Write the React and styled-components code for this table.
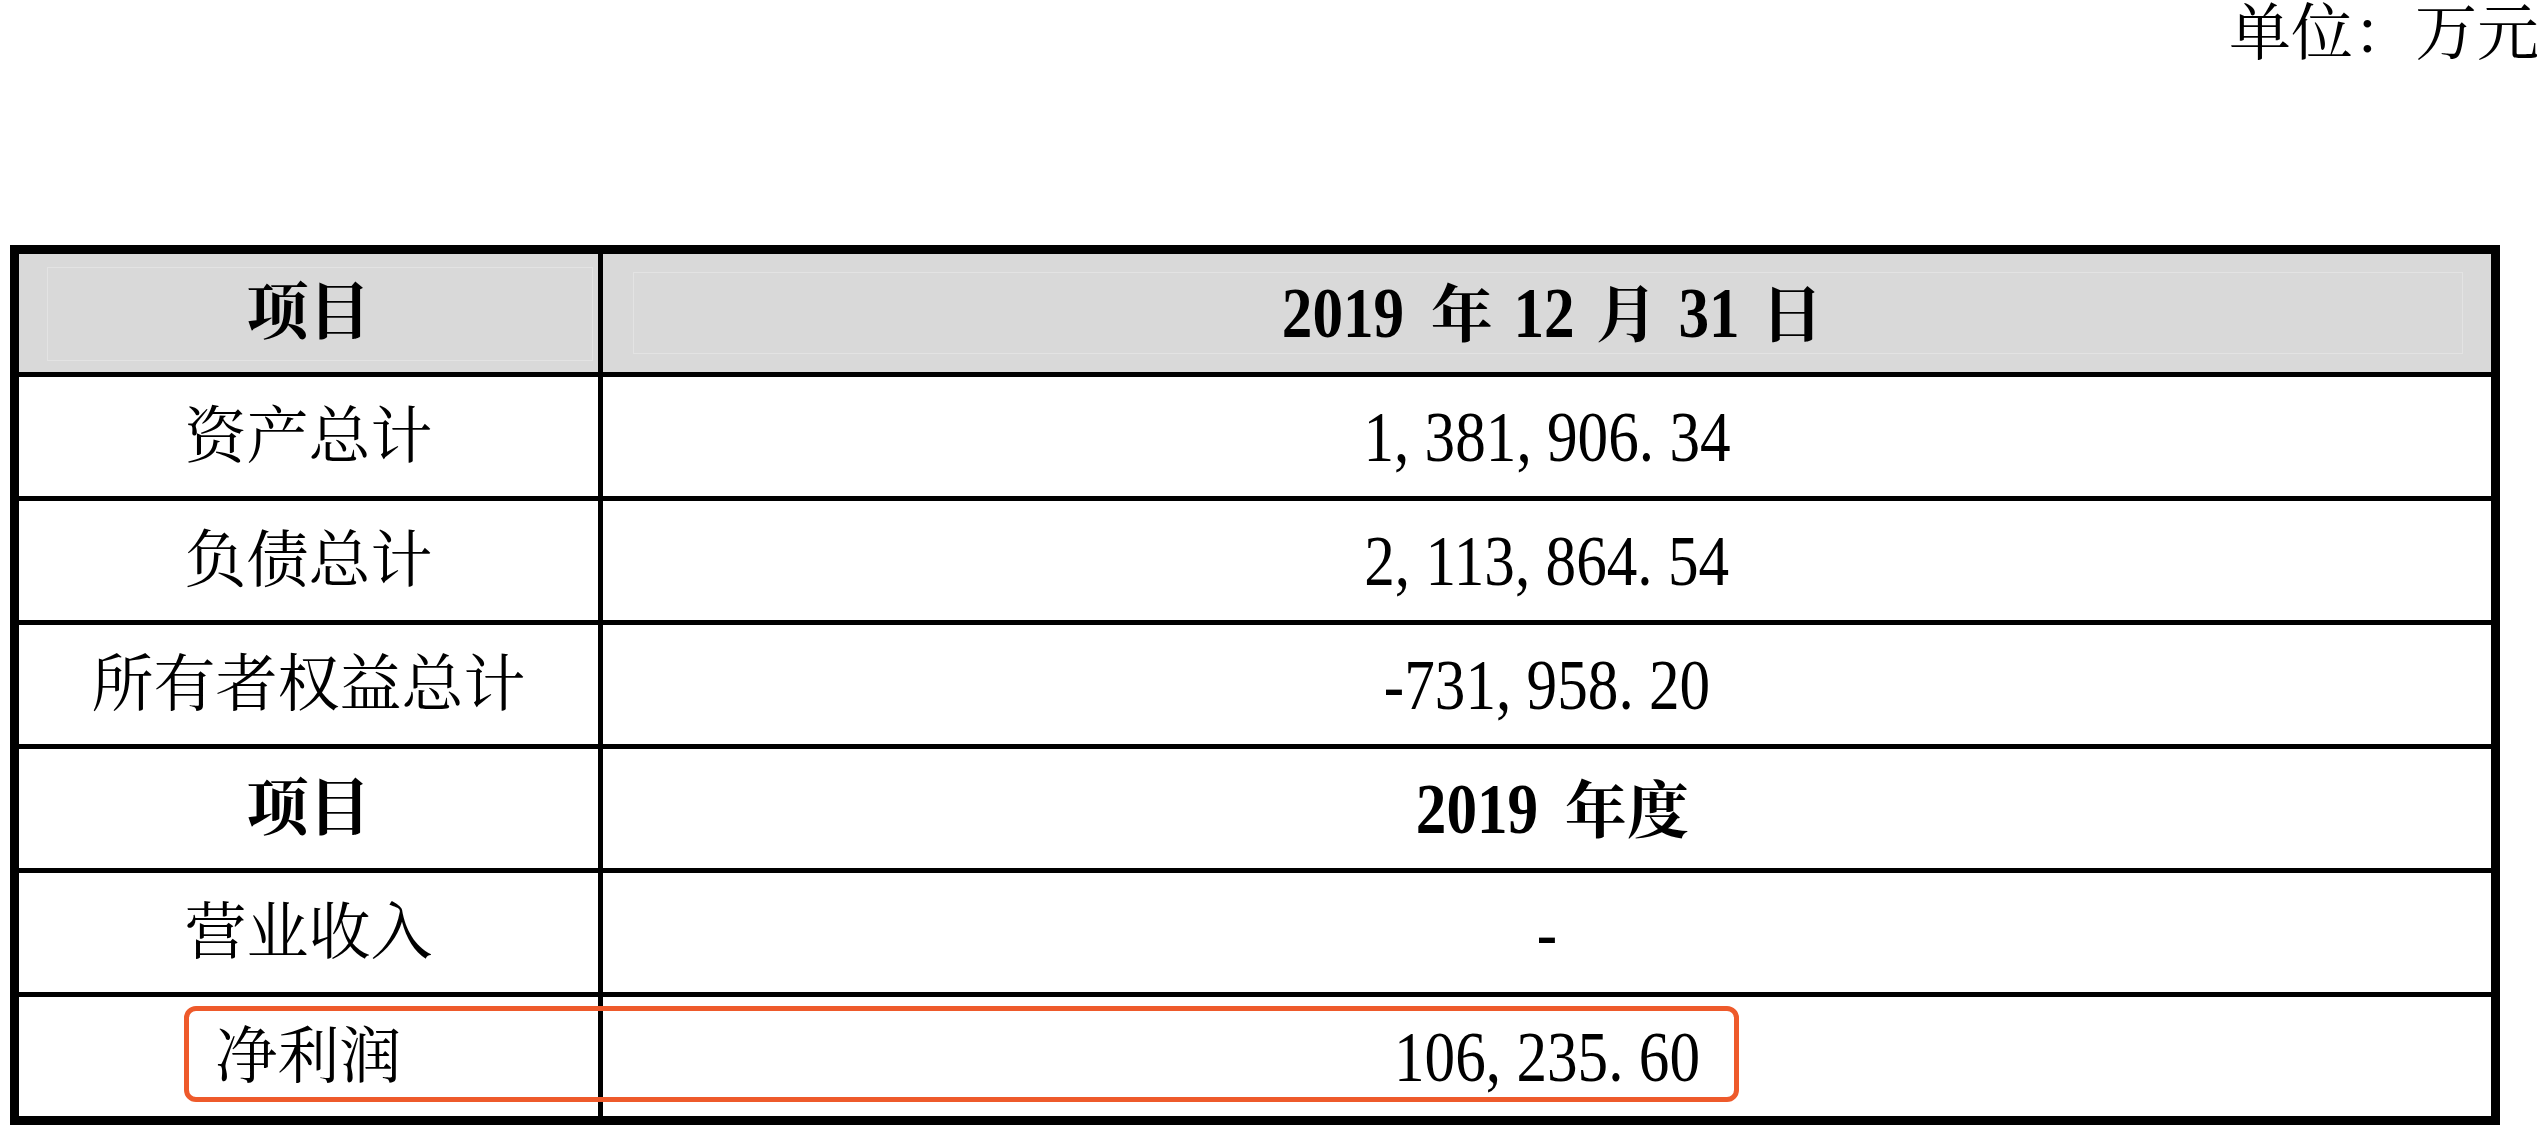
import React from 'react';
import styled, { createGlobalStyle } from 'styled-components';

const GlobalStyle = createGlobalStyle`
  html, body {
    margin: 0;
    padding: 0;
    background: #fff;
  }
  body {
    font-family: "Liberation Serif", "Noto Serif CJK SC", "Noto Sans CJK SC", serif;
    color: #000;
  }
`;

const Page = styled.div`
  width: 2548px;
  height: 1128px;
  overflow: hidden;
  background: #fff;
`;

const Unit = styled.div`
  height: 68px;
  line-height: 68px;
  font-size: 62px;
  text-align: right;
  padding-right: 9px;
`;

const Table = styled.div`
  margin: 177px 0 0 10px;
  width: 2490px;
  box-sizing: border-box;
  border: 9px solid #000;
  display: flex;
  flex-direction: column;
`;

const Row = styled.div`
  position: relative;
  display: grid;
  grid-template-columns: 579px 1fr;
  height: ${p => p.$h}px;
  border-top: ${p => (p.$first ? 0 : 5)}px solid #000;
  background: ${p => (p.$shaded ? '#d9d9d9' : '#fff')};
`;

const Cell = styled.div`
  position: relative;
  display: flex;
  align-items: center;
  justify-content: center;
  font-size: 62px;
  line-height: 1;
  font-weight: ${p => (p.$bold ? 700 : 400)};
  white-space: nowrap;

  & + & {
    border-left: 5px solid #000;
  }

  ${p =>
    p.$frame &&
    `
    &::before {
      content: "";
      position: absolute;
      top: ${p.$frame[0]}px;
      right: ${p.$frame[1]}px;
      bottom: ${p.$frame[2]}px;
      left: ${p.$frame[3]}px;
      border: 1px solid #e3e3e3;
    }
  `}
`;

const Label = styled.span`
  position: relative;
`;

const Digits = styled.span`
  display: inline-block;
  font-family: "Liberation Serif", serif;
  font-size: 72px;
  transform: scaleX(0.85);
`;

const Punct = styled.span`
  margin-right: 0.25em;
`;

const Highlight = styled.div`
  position: absolute;
  left: 165px;
  top: 9px;
  width: 1555px;
  height: 96px;
  box-sizing: border-box;
  border: 5px solid #ee5a2b;
  border-radius: 12px;
  pointer-events: none;
`;

function Num({ children }) {
  const chars = String(children).split('');
  return (
    <Digits>
      {chars.map((c, i) =>
        c === ',' || c === '.' ? <Punct key={i}>{c}</Punct> : c
      )}
    </Digits>
  );
}

const rows = [
  {
    label: '项目',
    value: (
      <>
        <Num>2019</Num> 年 <Num>12</Num> 月 <Num>31</Num> 日
      </>
    ),
    bold: true,
    shaded: true,
    h: 118,
    frames: [[13, 5, 11, 28], [18, 28, 18, 30]],
  },
  { label: '资产总计', value: <Num>1,381,906.34</Num> },
  { label: '负债总计', value: <Num>2,113,864.54</Num> },
  { label: '所有者权益总计', value: <Num>-731,958.20</Num> },
  {
    label: '项目',
    value: (
      <>
        <Num>2019</Num> 年度
      </>
    ),
    bold: true,
  },
  { label: '营业收入', value: <Num>-</Num> },
  { label: '净利润', value: <Num>106,235.60</Num>, highlight: true },
];

export default function App() {
  return (
    <Page>
      <GlobalStyle />
      <Unit>单位：万元</Unit>
      <Table>
        {rows.map((r, i) => (
          <Row key={i} $first={i === 0} $shaded={r.shaded} $h={r.h || 119}>
            <Cell $bold={r.bold} $frame={r.frames && r.frames[0]}>
              <Label>{r.label}</Label>
            </Cell>
            <Cell $bold={r.bold} $frame={r.frames && r.frames[1]}>
              <Label>{r.value}</Label>
            </Cell>
            {r.highlight && <Highlight />}
          </Row>
        ))}
      </Table>
    </Page>
  );
}
